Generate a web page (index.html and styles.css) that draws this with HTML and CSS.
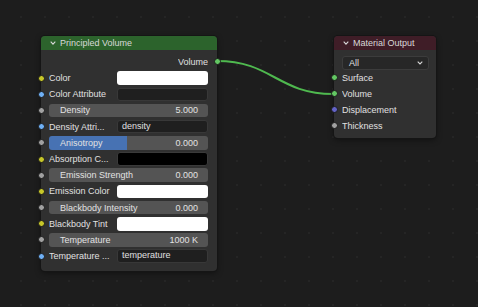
FILE: index.html
```html
<!DOCTYPE html>
<html lang="en">
<head>
    <meta charset="UTF-8">
    <meta name="viewport" content="width=device-width, initial-scale=1.0">
    <title>Node Editor</title>
    <link rel="stylesheet" href="styles.css">
</head>
<body>
    <div class="editor">
        <!-- link between the two nodes -->
        <svg class="links" width="478" height="307" viewBox="0 0 478 307">
            <path d="M217 61 C 272 61, 278 94, 333 94" />
        </svg>

        <div class="node volume-node">
            <div class="node-header header-shader">
                <svg class="chevron" width="6" height="4" viewBox="0 0 6 4"><path d="M0.7 0.7 L3 3.1 L5.3 0.7" /></svg>
                <span>Principled Volume</span>
            </div>
            <div class="node-body">
                <div class="row row-output">
                    <span class="label">Volume</span>
                    <i class="socket out shader"></i>
                </div>
                <div class="row">
                    <i class="socket color"></i>
                    <span class="label">Color</span>
                    <span class="swatch swatch-white"></span>
                </div>
                <div class="row">
                    <i class="socket string"></i>
                    <span class="label">Color Attribute</span>
                    <span class="field"></span>
                </div>
                <div class="row">
                    <i class="socket float"></i>
                    <div class="slider"><span>Density</span><span>5.000</span></div>
                </div>
                <div class="row">
                    <i class="socket string"></i>
                    <span class="label">Density Attri...</span>
                    <span class="field">density</span>
                </div>
                <div class="row">
                    <i class="socket float"></i>
                    <div class="slider slider-fill"><span>Anisotropy</span><span>0.000</span></div>
                </div>
                <div class="row">
                    <i class="socket color"></i>
                    <span class="label">Absorption C...</span>
                    <span class="swatch swatch-black"></span>
                </div>
                <div class="row">
                    <i class="socket float"></i>
                    <div class="slider"><span>Emission Strength</span><span>0.000</span></div>
                </div>
                <div class="row">
                    <i class="socket color"></i>
                    <span class="label">Emission Color</span>
                    <span class="swatch swatch-white"></span>
                </div>
                <div class="row">
                    <i class="socket float"></i>
                    <div class="slider"><span>Blackbody Intensity</span><span>0.000</span></div>
                </div>
                <div class="row">
                    <i class="socket color"></i>
                    <span class="label">Blackbody Tint</span>
                    <span class="swatch swatch-white"></span>
                </div>
                <div class="row">
                    <i class="socket float"></i>
                    <div class="slider"><span>Temperature</span><span>1000 K</span></div>
                </div>
                <div class="row">
                    <i class="socket string"></i>
                    <span class="label">Temperature ...</span>
                    <span class="field">temperature</span>
                </div>
            </div>
        </div>

        <div class="node output-node">
            <div class="node-header header-output">
                <svg class="chevron" width="6" height="4" viewBox="0 0 6 4"><path d="M0.7 0.7 L3 3.1 L5.3 0.7" /></svg>
                <span>Material Output</span>
            </div>
            <div class="node-body">
                <div class="dropdown">
                    <span>All</span>
                    <svg class="dropdown-arrow" width="6" height="4" viewBox="0 0 6 4"><path d="M0.7 0.7 L3 3 L5.3 0.7" /></svg>
                </div>
                <div class="row row-short">
                    <i class="socket shader"></i>
                    <span class="label">Surface</span>
                </div>
                <div class="row row-short">
                    <i class="socket shader"></i>
                    <span class="label">Volume</span>
                </div>
                <div class="row row-short">
                    <i class="socket vector"></i>
                    <span class="label">Displacement</span>
                </div>
                <div class="row row-short">
                    <i class="socket float"></i>
                    <span class="label">Thickness</span>
                </div>
            </div>
        </div>
    </div>
</body>
</html>
```

FILE: styles.css
```css
/* Reset */
* {
    margin: 0;
    padding: 0;
    box-sizing: border-box;
}

body {
    font-family: 'Liberation Sans', Arial, sans-serif;
    font-size: 9px;
    background: #1d1d1d;
    color: #e0e0e0;
    overflow: hidden;
}

/* Canvas */
.editor {
    position: relative;
    width: 478px;
    height: 307px;
    background-color: #1d1d1d;
    background-image: radial-gradient(circle, #252525 0.8px, transparent 1.2px);
    background-size: 24px 24px;
    background-position: 9px 5px;
}

.links {
    position: absolute;
    left: 0;
    top: 0;
}

.links path {
    fill: none;
    stroke: #4fb94f;
    stroke-width: 2;
}

/* Nodes */
.node {
    position: absolute;
    background: #303030;
    border-radius: 4px;
    box-shadow: 0 0 0 1px #151515, 0 2px 6px rgba(0, 0, 0, 0.45);
}

.volume-node {
    left: 41px;
    top: 36px;
    width: 176px;
}

.output-node {
    left: 334px;
    top: 36px;
    width: 102px;
}

.node-header {
    height: 14px;
    display: flex;
    align-items: center;
    gap: 4px;
    padding-left: 9px;
    border-radius: 4px 4px 0 0;
    color: #d8d8d8;
}

.header-shader {
    background: #2c632c;
}

.header-output {
    background: #3f1d27;
}

.chevron path,
.dropdown-arrow path {
    fill: none;
    stroke: #d8d8d8;
    stroke-width: 1.1;
}

.volume-node .node-body {
    padding: 3px 0 7px;
}

.output-node .node-body {
    padding: 6px 0 4px;
}

/* Rows */
.row {
    position: relative;
    height: 16.2px;
    display: flex;
    align-items: center;
    padding: 0 9px 0 8px;
}

.row-output {
    height: 17px;
    justify-content: flex-end;
}

.row-short {
    height: 16px;
}

.label {
    flex: 0 0 68px;
    white-space: nowrap;
    overflow: hidden;
}

.row-short .label {
    flex: 1;
}

.row-output .label {
    flex: none;
}

/* Sockets */
.socket {
    position: absolute;
    left: -3.5px;
    top: 50%;
    width: 7px;
    height: 7px;
    margin-top: -3.5px;
    border-radius: 50%;
    border: 1px solid #1a1a1a;
}

.socket.out {
    left: auto;
    right: -3.5px;
}

.shader { background: #63c763; }
.color  { background: #c7c729; }
.float  { background: #a1a1a1; }
.string { background: #6fb0f5; }
.vector { background: #6363c7; }

/* Widgets */
.swatch,
.field {
    flex: 1;
    height: 13.5px;
    border-radius: 3px;
}

.swatch-white {
    background: #ffffff;
}

.swatch-black {
    background: #000000;
    border: 1px solid #3a3a3a;
}

.field {
    background: #1f1f1f;
    border: 1px solid #383838;
    padding-left: 4px;
    line-height: 11.5px;
}

.slider {
    flex: 1;
    height: 13.5px;
    display: flex;
    align-items: center;
    justify-content: space-between;
    padding: 0 10px 0 11px;
    background: #545454;
    border-radius: 3px;
    color: #e2e2e2;
}

.slider-fill {
    background: linear-gradient(to right, #4772b3 49%, #545454 49%);
}

.dropdown {
    margin: 0 7px 0 8px;
    height: 13.5px;
    display: flex;
    align-items: center;
    justify-content: space-between;
    padding: 0 5px 0 6px;
    background: #272727;
    border: 1px solid #3c3c3c;
    border-radius: 3px;
}
```
